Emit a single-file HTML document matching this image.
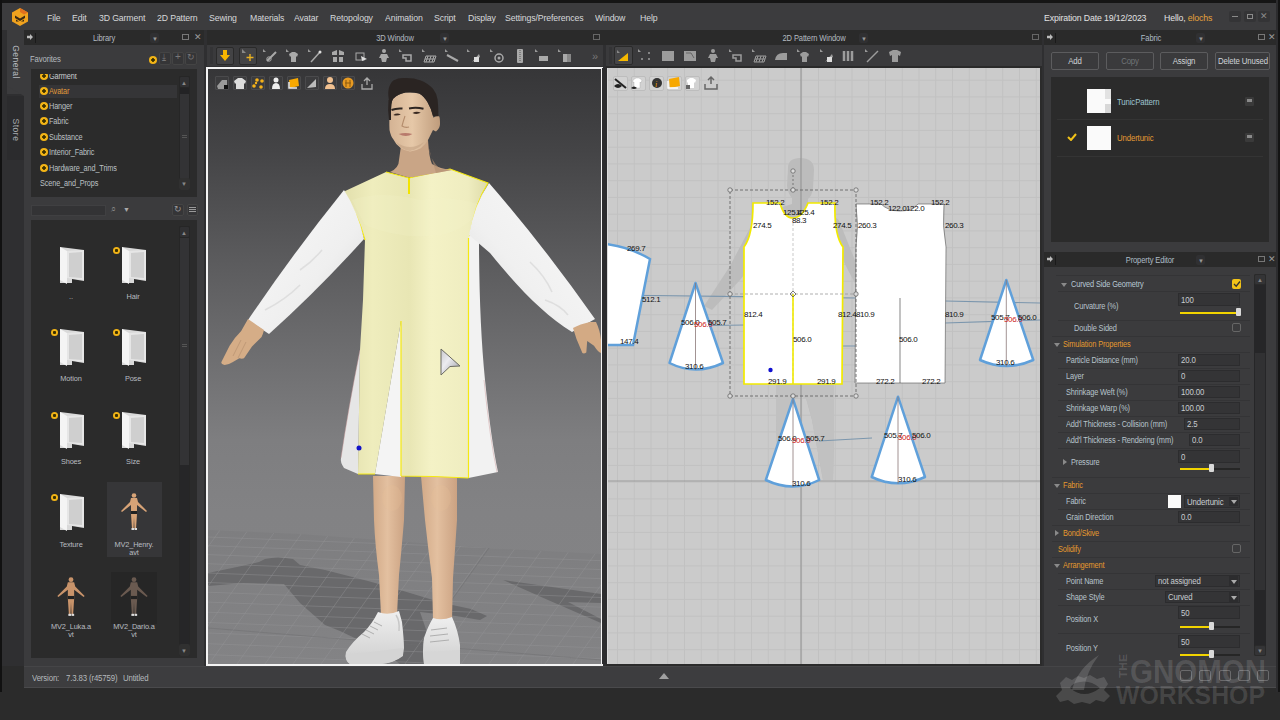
<!DOCTYPE html>
<html><head><meta charset="utf-8">
<style>
*{margin:0;padding:0;box-sizing:border-box}
html,body{width:1280px;height:720px;overflow:hidden;background:#2b2b2b;font-family:"Liberation Sans",sans-serif;color:#c9ccd0}
.a{position:absolute}
.t{position:absolute;white-space:nowrap;font-size:9px;line-height:12px;letter-spacing:-0.15px}
svg{position:absolute;overflow:hidden}
</style></head><body>
<div class="a" style="left:0px;top:0px;width:1280px;height:3px;background:#151515;"></div>
<div class="a" style="left:0px;top:0px;width:2px;height:692px;background:#111;"></div>
<div class="a" style="left:2px;top:3px;width:1274px;height:27px;background:#3c3c3e;"></div>
<svg style="left:10px;top:7px" width="20" height="20" viewBox="0 0 20 20">
<polygon points="10,1 18,5.5 18,14.5 10,19 2,14.5 2,5.5" fill="#f0a21e"/>
<polygon points="10,1 18,5.5 14,7.5 10,5" fill="#e2701e"/>
<path d="M5 8.5 L10 11.5 L15 8.5 L15 11 L10 14 L5 11 Z" fill="#3a2a14"/>
<path d="M6 12.5 L9 14.5 L6 14.5Z M14 12.5 L11 14.5 L14 14.5Z" fill="#3a2a14"/>
</svg>
<div class="t" style="left:47px;top:12px;font-size:9.5px;color:#d6d8da;transform:scaleX(0.92);transform-origin:0 50%;">File</div>
<div class="t" style="left:72px;top:12px;font-size:9.5px;color:#d6d8da;transform:scaleX(0.92);transform-origin:0 50%;">Edit</div>
<div class="t" style="left:99px;top:12px;font-size:9.5px;color:#d6d8da;transform:scaleX(0.92);transform-origin:0 50%;">3D Garment</div>
<div class="t" style="left:157px;top:12px;font-size:9.5px;color:#d6d8da;transform:scaleX(0.92);transform-origin:0 50%;">2D Pattern</div>
<div class="t" style="left:209px;top:12px;font-size:9.5px;color:#d6d8da;transform:scaleX(0.92);transform-origin:0 50%;">Sewing</div>
<div class="t" style="left:250px;top:12px;font-size:9.5px;color:#d6d8da;transform:scaleX(0.92);transform-origin:0 50%;">Materials</div>
<div class="t" style="left:294px;top:12px;font-size:9.5px;color:#d6d8da;transform:scaleX(0.92);transform-origin:0 50%;">Avatar</div>
<div class="t" style="left:330px;top:12px;font-size:9.5px;color:#d6d8da;transform:scaleX(0.92);transform-origin:0 50%;">Retopology</div>
<div class="t" style="left:385px;top:12px;font-size:9.5px;color:#d6d8da;transform:scaleX(0.92);transform-origin:0 50%;">Animation</div>
<div class="t" style="left:434px;top:12px;font-size:9.5px;color:#d6d8da;transform:scaleX(0.92);transform-origin:0 50%;">Script</div>
<div class="t" style="left:468px;top:12px;font-size:9.5px;color:#d6d8da;transform:scaleX(0.92);transform-origin:0 50%;">Display</div>
<div class="t" style="left:505px;top:12px;font-size:9.5px;color:#d6d8da;transform:scaleX(0.92);transform-origin:0 50%;">Settings/Preferences</div>
<div class="t" style="left:595px;top:12px;font-size:9.5px;color:#d6d8da;transform:scaleX(0.92);transform-origin:0 50%;">Window</div>
<div class="t" style="left:640px;top:12px;font-size:9.5px;color:#d6d8da;transform:scaleX(0.92);transform-origin:0 50%;">Help</div>
<div class="t" style="left:1044px;top:12px;font-size:9.5px;color:#e2e2e2;transform:scaleX(0.92);transform-origin:0 50%;">Expiration Date 19/12/2023</div>
<div class="t" style="left:1164px;top:12px;font-size:9.5px;color:#e2e2e2;transform:scaleX(0.92);transform-origin:0 50%;">Hello, <span style="color:#e6a33c">elochs</span></div>
<div class="a" style="left:1229px;top:11px;width:12px;height:11px;background:#343436;border-radius:2px"></div>
<div class="a" style="left:1244px;top:11px;width:12px;height:11px;background:#343436;border-radius:2px"></div>
<div class="a" style="left:1258px;top:11px;width:12px;height:11px;background:#343436;border-radius:2px"></div>
<div class="a" style="left:1232px;top:16px;width:6px;height:1px;background:#8a8a8a"></div>
<div class="a" style="left:1247px;top:14px;width:6px;height:5px;border:1px solid #8a8a8a"></div>
<div class="t" style="left:1260px;top:10px;font-size:9px;color:#8a8a8a;transform:none">&#x2715;</div>
<div class="a" style="left:2px;top:30px;width:22px;height:636px;background:#2f2f31;"></div>
<div class="a" style="left:7px;top:30px;width:17px;height:64px;background:#3b3b3d;"></div>
<svg style="left:7px;top:86px" width="17" height="10"><polygon points="0,0 17,0 17,10" fill="#3b3b3d"/></svg>
<div class="a" style="left:7px;top:96px;width:17px;height:64px;background:#2b2b2d;"></div>
<div class="t" style="left:-2px;top:56px;width:36px;text-align:center;font-size:8.5px;color:#b8bcc0;transform:rotate(90deg);letter-spacing:0.5px">General</div>
<div class="t" style="left:-2px;top:124px;width:36px;text-align:center;font-size:8.5px;color:#a8acb0;transform:rotate(90deg);letter-spacing:0.5px">Store</div>
<div class="a" style="left:24px;top:30px;width:180px;height:15px;background:#2a2a2a;"></div>
<div class="a" style="left:24px;top:45px;width:180px;height:621px;background:#3b3b3d;"></div>
<div class="a" style="left:27px;top:34px;width:6px;height:6px;background:#bbb;clip-path:polygon(0 30%,50% 30%,50% 0,100% 50%,50% 100%,50% 70%,0 70%)"></div>
<div class="a" style="left:35px;top:33px;width:1px;height:10px;background:#1a1a1a;"></div>
<div class="t" style="left:4px;width:200px;text-align:center;top:32px;font-size:9px;color:#b4bac0;transform:scaleX(0.84);">Library</div>
<div class="a" style="left:150px;top:33px;width:9px;height:10px;background:#303032;border-radius:2px"></div>
<div class="t" style="left:152px;top:33px;font-size:6px;color:#999">&#9660;</div>
<div class="a" style="left:182px;top:34px;width:7px;height:6px;background:transparent;border:1px solid #777"></div>
<div class="t" style="left:194px;top:31px;font-size:9px;color:#9a9a9a">&#x2715;</div>
<div class="t" style="left:30px;top:53px;font-size:9px;color:#b4babe;transform:scaleX(0.86);transform-origin:0 50%;">Favorites</div>
<div class="a" style="left:149px;top:56px;width:8px;height:8px;border-radius:50%;background:radial-gradient(#3a3000 0 1.5px,#f2b416 2px);"></div>
<div class="a" style="left:159px;top:52px;width:12px;height:13px;background:#353537;border:1px solid #444;border-radius:2px"></div>
<div class="a" style="left:172px;top:52px;width:12px;height:13px;background:#353537;border:1px solid #444;border-radius:2px"></div>
<div class="a" style="left:185px;top:52px;width:12px;height:13px;background:#353537;border:1px solid #444;border-radius:2px"></div>
<div class="t" style="left:162px;top:51px;font-size:9px;color:#777">&#x2913;</div>
<div class="t" style="left:175px;top:51px;font-size:10px;color:#777">+</div>
<div class="t" style="left:187px;top:51px;font-size:9px;color:#777">&#x21bb;</div>
<div class="a" style="left:31px;top:69px;width:166px;height:128px;background:#2b2b2b;"></div>
<div class="a" style="left:39px;top:85px;width:138px;height:13px;background:#353537;"></div>
<div class="a" style="left:40px;top:72px;width:8px;height:8px;border-radius:50%;background:radial-gradient(#3a3000 0 1.5px,#f2b416 2px);"></div>
<div class="t" style="left:49px;top:70px;font-size:8.5px;color:#c9ccd0;transform:scaleX(0.86);transform-origin:0 50%;">Garment</div>
<div class="a" style="left:40px;top:87px;width:8px;height:8px;border-radius:50%;background:radial-gradient(#3a3000 0 1.5px,#f2b416 2px);"></div>
<div class="t" style="left:49px;top:85px;font-size:8.5px;color:#e19a3a;transform:scaleX(0.86);transform-origin:0 50%;">Avatar</div>
<div class="a" style="left:40px;top:102px;width:8px;height:8px;border-radius:50%;background:radial-gradient(#3a3000 0 1.5px,#f2b416 2px);"></div>
<div class="t" style="left:49px;top:100px;font-size:8.5px;color:#bcc0c4;transform:scaleX(0.86);transform-origin:0 50%;">Hanger</div>
<div class="a" style="left:40px;top:117px;width:8px;height:8px;border-radius:50%;background:radial-gradient(#3a3000 0 1.5px,#f2b416 2px);"></div>
<div class="t" style="left:49px;top:115px;font-size:8.5px;color:#bcc0c4;transform:scaleX(0.86);transform-origin:0 50%;">Fabric</div>
<div class="a" style="left:40px;top:133px;width:8px;height:8px;border-radius:50%;background:radial-gradient(#3a3000 0 1.5px,#f2b416 2px);"></div>
<div class="t" style="left:49px;top:131px;font-size:8.5px;color:#bcc0c4;transform:scaleX(0.86);transform-origin:0 50%;">Substance</div>
<div class="a" style="left:40px;top:148px;width:8px;height:8px;border-radius:50%;background:radial-gradient(#3a3000 0 1.5px,#f2b416 2px);"></div>
<div class="t" style="left:49px;top:146px;font-size:8.5px;color:#bcc0c4;transform:scaleX(0.86);transform-origin:0 50%;">Interior_Fabric</div>
<div class="a" style="left:40px;top:164px;width:8px;height:8px;border-radius:50%;background:radial-gradient(#3a3000 0 1.5px,#f2b416 2px);"></div>
<div class="t" style="left:49px;top:162px;font-size:8.5px;color:#bcc0c4;transform:scaleX(0.86);transform-origin:0 50%;">Hardware_and_Trims</div>
<div class="t" style="left:40px;top:177px;font-size:8.5px;color:#bcc0c4;transform:scaleX(0.86);transform-origin:0 50%;">Scene_and_Props</div>
<div class="a" style="left:31px;top:69px;width:166px;height:5px;background:#2b2b2b;"></div>
<div class="a" style="left:179px;top:76px;width:11px;height:114px;background:#333335;border-radius:2px;border:1px solid #262626"></div>
<div class="a" style="left:179px;top:76px;width:11px;height:12px;background:#303032;border-radius:2px;border:1px solid #262626"></div>
<div class="t" style="left:181px;top:77px;font-size:6px;color:#888;transform:none">&#9650;</div>
<div class="a" style="left:180px;top:88px;width:9px;height:6px;background:#232325;"></div>
<div class="a" style="left:182px;top:135px;width:5px;height:1px;background:#555;"></div>
<div class="a" style="left:182px;top:137px;width:5px;height:1px;background:#555;"></div>
<div class="a" style="left:179px;top:178px;width:11px;height:12px;background:#303030;border-radius:2px"></div>
<div class="t" style="left:181px;top:178px;font-size:6px;color:#888">&#9660;</div>
<div class="a" style="left:31px;top:205px;width:75px;height:11px;background:#333335;border:1px solid #404042"></div>
<div class="t" style="left:111px;top:203px;font-size:9px;color:#888">&#x2315;</div>
<div class="t" style="left:123px;top:204px;font-size:7px;color:#aaa">&#9660;</div>
<div class="a" style="left:172px;top:204px;width:12px;height:12px;background:#353537;border:1px solid #444;border-radius:2px"></div>
<div class="t" style="left:174px;top:203px;font-size:9px;color:#999">&#x21bb;</div>
<div class="a" style="left:187px;top:204px;width:11px;height:12px;background:#353537;border:1px solid #444;border-radius:2px"></div>
<div class="a" style="left:189px;top:207px;width:7px;height:6px;background:repeating-linear-gradient(#999 0 1px,transparent 1px 2px)"></div>
<div class="a" style="left:31px;top:220px;width:166px;height:438px;background:#2b2b2b;"></div>
<div class="a" style="left:179px;top:226px;width:11px;height:430px;background:#262628;border-radius:2px;border:1px solid #262626"></div>
<div class="a" style="left:179px;top:226px;width:11px;height:12px;background:#303032;border-radius:2px;border:1px solid #262626"></div>
<div class="t" style="left:181px;top:227px;font-size:6px;color:#888;transform:none">&#9650;</div>
<div class="a" style="left:180px;top:238px;width:9px;height:227px;background:#333335;"></div>
<div class="a" style="left:182px;top:344px;width:5px;height:1px;background:#555;"></div>
<div class="a" style="left:182px;top:346px;width:5px;height:1px;background:#555;"></div>
<div class="a" style="left:179px;top:644px;width:11px;height:12px;background:#303030;border-radius:2px"></div>
<div class="t" style="left:181px;top:645px;font-size:6px;color:#888">&#9660;</div>
<svg style="left:58px;top:247px" width="28" height="38" viewBox="0 0 28 38"><polygon points="2,0 26,3 26,34 14,32 14,36 2,36" fill="#d9d9d9"/><polygon points="2,0 9,4 9,37 2,33" fill="#f4f4f4"/><polygon points="9,4 26,3 26,33 9,31" fill="#e6e6e6"/><polygon points="11,6 24,5 24,31 11,30" fill="#cfcfcf"/></svg>
<div class="t" style="left:-29px;width:200px;text-align:center;top:291px;font-size:8px;color:#b8bcc0;transform:scaleX(0.92);">..</div>
<svg style="left:120px;top:247px" width="28" height="38" viewBox="0 0 28 38"><polygon points="2,0 26,3 26,34 14,32 14,36 2,36" fill="#d9d9d9"/><polygon points="2,0 9,4 9,37 2,33" fill="#f4f4f4"/><polygon points="9,4 26,3 26,33 9,31" fill="#e6e6e6"/><polygon points="11,6 24,5 24,31 11,30" fill="#cfcfcf"/></svg>
<div class="a" style="left:113px;top:247px;width:7px;height:7px;border-radius:50%;background:radial-gradient(#3a3000 0 1.3px,#f2b416 1.8px);"></div>
<div class="t" style="left:33px;width:200px;text-align:center;top:291px;font-size:8px;color:#b8bcc0;transform:scaleX(0.92);">Hair</div>
<svg style="left:58px;top:329px" width="28" height="38" viewBox="0 0 28 38"><polygon points="2,0 26,3 26,34 14,32 14,36 2,36" fill="#d9d9d9"/><polygon points="2,0 9,4 9,37 2,33" fill="#f4f4f4"/><polygon points="9,4 26,3 26,33 9,31" fill="#e6e6e6"/><polygon points="11,6 24,5 24,31 11,30" fill="#cfcfcf"/></svg>
<div class="a" style="left:51px;top:329px;width:7px;height:7px;border-radius:50%;background:radial-gradient(#3a3000 0 1.3px,#f2b416 1.8px);"></div>
<div class="t" style="left:-29px;width:200px;text-align:center;top:373px;font-size:8px;color:#b8bcc0;transform:scaleX(0.92);">Motion</div>
<svg style="left:120px;top:329px" width="28" height="38" viewBox="0 0 28 38"><polygon points="2,0 26,3 26,34 14,32 14,36 2,36" fill="#d9d9d9"/><polygon points="2,0 9,4 9,37 2,33" fill="#f4f4f4"/><polygon points="9,4 26,3 26,33 9,31" fill="#e6e6e6"/><polygon points="11,6 24,5 24,31 11,30" fill="#cfcfcf"/></svg>
<div class="a" style="left:113px;top:329px;width:7px;height:7px;border-radius:50%;background:radial-gradient(#3a3000 0 1.3px,#f2b416 1.8px);"></div>
<div class="t" style="left:33px;width:200px;text-align:center;top:373px;font-size:8px;color:#b8bcc0;transform:scaleX(0.92);">Pose</div>
<svg style="left:58px;top:412px" width="28" height="38" viewBox="0 0 28 38"><polygon points="2,0 26,3 26,34 14,32 14,36 2,36" fill="#d9d9d9"/><polygon points="2,0 9,4 9,37 2,33" fill="#f4f4f4"/><polygon points="9,4 26,3 26,33 9,31" fill="#e6e6e6"/><polygon points="11,6 24,5 24,31 11,30" fill="#cfcfcf"/></svg>
<div class="a" style="left:51px;top:412px;width:7px;height:7px;border-radius:50%;background:radial-gradient(#3a3000 0 1.3px,#f2b416 1.8px);"></div>
<div class="t" style="left:-29px;width:200px;text-align:center;top:456px;font-size:8px;color:#b8bcc0;transform:scaleX(0.92);">Shoes</div>
<svg style="left:120px;top:412px" width="28" height="38" viewBox="0 0 28 38"><polygon points="2,0 26,3 26,34 14,32 14,36 2,36" fill="#d9d9d9"/><polygon points="2,0 9,4 9,37 2,33" fill="#f4f4f4"/><polygon points="9,4 26,3 26,33 9,31" fill="#e6e6e6"/><polygon points="11,6 24,5 24,31 11,30" fill="#cfcfcf"/></svg>
<div class="a" style="left:113px;top:412px;width:7px;height:7px;border-radius:50%;background:radial-gradient(#3a3000 0 1.3px,#f2b416 1.8px);"></div>
<div class="t" style="left:33px;width:200px;text-align:center;top:456px;font-size:8px;color:#b8bcc0;transform:scaleX(0.92);">Size</div>
<svg style="left:58px;top:494px" width="28" height="38" viewBox="0 0 28 38"><polygon points="2,0 26,3 26,34 14,32 14,36 2,36" fill="#d9d9d9"/><polygon points="2,0 9,4 9,37 2,33" fill="#f4f4f4"/><polygon points="9,4 26,3 26,33 9,31" fill="#e6e6e6"/><polygon points="11,6 24,5 24,31 11,30" fill="#cfcfcf"/></svg>
<div class="a" style="left:51px;top:494px;width:7px;height:7px;border-radius:50%;background:radial-gradient(#3a3000 0 1.3px,#f2b416 1.8px);"></div>
<div class="t" style="left:-29px;width:200px;text-align:center;top:539px;font-size:8px;color:#b8bcc0;transform:scaleX(0.92);">Texture</div>
<div class="a" style="left:107px;top:482px;width:55px;height:75px;background:#363638;"></div>
<div class="t" style="left:34px;width:200px;text-align:center;top:539px;font-size:8px;color:#b8bcc0;transform:scaleX(0.92);">MV2_Henry.</div>
<div class="t" style="left:34px;width:200px;text-align:center;top:547px;font-size:8px;color:#b8bcc0;transform:scaleX(0.92);">avt</div>
<div class="a" style="left:111px;top:572px;width:46px;height:52px;background:#262626;"></div>
<div class="t" style="left:-29px;width:200px;text-align:center;top:621px;font-size:8px;color:#b8bcc0;transform:scaleX(0.92);">MV2_Luka.a</div>
<div class="t" style="left:-29px;width:200px;text-align:center;top:629px;font-size:8px;color:#b8bcc0;transform:scaleX(0.92);">vt</div>
<div class="t" style="left:34px;width:200px;text-align:center;top:621px;font-size:8px;color:#b8bcc0;transform:scaleX(0.92);">MV2_Dario.a</div>
<div class="t" style="left:34px;width:200px;text-align:center;top:629px;font-size:8px;color:#b8bcc0;transform:scaleX(0.92);">vt</div>
<svg style="left:114.0px;top:492px;" width="40.0" height="40" viewBox="0 0 40 40"><circle cx="20" cy="3.5" r="2.3" fill="#d7a377"/><path d="M17 6 L23 6 L24 10 L33 19 L32 20 L23 13 L23 22 L22 37 L20.5 37 L20 25 L19.5 37 L18 37 L17 22 L17 13 L8 20 L7 19 L16 10 Z" fill="#d7a377"/><rect x="17" y="19" width="6" height="3" fill="#222"/><rect x="17.5" y="36" width="2.5" height="2" fill="#ddd"/><rect x="20.5" y="36" width="2.5" height="2" fill="#ddd"/></svg>
<svg style="left:50.0px;top:576px;" width="42.0" height="42" viewBox="0 0 40 40"><circle cx="20" cy="3.5" r="2.3" fill="#c8936a"/><path d="M17 6 L23 6 L24 10 L33 19 L32 20 L23 13 L23 22 L22 37 L20.5 37 L20 25 L19.5 37 L18 37 L17 22 L17 13 L8 20 L7 19 L16 10 Z" fill="#c8936a"/><rect x="17" y="19" width="6" height="3" fill="#222"/><rect x="17.5" y="36" width="2.5" height="2" fill="#ddd"/><rect x="20.5" y="36" width="2.5" height="2" fill="#ddd"/></svg>
<svg style="left:113.0px;top:576px;" width="42.0" height="42" viewBox="0 0 40 40"><circle cx="20" cy="3.5" r="2.3" fill="#6a5a50"/><path d="M17 6 L23 6 L24 10 L33 19 L32 20 L23 13 L23 22 L22 37 L20.5 37 L20 25 L19.5 37 L18 37 L17 22 L17 13 L8 20 L7 19 L16 10 Z" fill="#6a5a50"/><rect x="17" y="19" width="6" height="3" fill="#222"/><rect x="17.5" y="36" width="2.5" height="2" fill="#ddd"/><rect x="20.5" y="36" width="2.5" height="2" fill="#ddd"/></svg>
<div class="a" style="left:24px;top:666px;width:1252px;height:22px;background:#3d3d3f;border-top:1px solid #454547;border-bottom:1px solid #4a4a4c"></div>
<div class="t" style="left:32px;top:672px;font-size:8.5px;color:#b5b9bd;transform:scaleX(0.92);transform-origin:0 50%;">Version:</div>
<div class="t" style="left:66px;top:672px;font-size:8.5px;color:#b5b9bd;transform:scaleX(0.92);transform-origin:0 50%;">7.3.83 (r45759)</div>
<div class="t" style="left:123px;top:672px;font-size:8.5px;color:#b5b9bd;transform:scaleX(0.92);transform-origin:0 50%;">Untitled</div>
<div class="a" style="left:204px;top:30px;width:402px;height:636px;background:#2f2f31;"></div>
<div class="a" style="left:207px;top:30px;width:399px;height:15px;background:#2a2a2a;"></div>
<div class="t" style="left:295px;width:200px;text-align:center;top:32px;font-size:9px;color:#b4bac0;transform:scaleX(0.84);">3D Window</div>
<div class="a" style="left:440px;top:33px;width:9px;height:10px;background:#303032;border-radius:2px"></div>
<div class="t" style="left:442px;top:33px;font-size:6px;color:#999">&#9660;</div>
<div class="a" style="left:593px;top:34px;width:7px;height:6px;background:transparent;border:1px solid #666"></div>
<div class="a" style="left:207px;top:45px;width:396px;height:21px;background:#3a3a3c;"></div>
<div class="a" style="left:210px;top:47px;width:3px;height:17px;background:#343436;"></div>
<div class="a" style="left:216px;top:47px;width:18px;height:18px;background:#434345;border:1px solid #2a2a2a;border-radius:2px"></div>
<div class="a" style="left:239px;top:47px;width:18px;height:18px;background:#434345;border:1px solid #2a2a2a;border-radius:2px"></div>
<svg style="left:219px;top:50px" width="12" height="12" viewBox="0 0 12 12"><path d="M4 0 H8 V5 H11 L6 11 L1 5 H4 Z" fill="#f7b500"/></svg>
<svg style="left:241px;top:49px" width="14" height="14" viewBox="0 0 14 14"><path d="M1 0 L5 4 L1 4Z" fill="#888"/><path d="M9 5 V12 M5.5 8.5 H12.5" stroke="#e8b020" stroke-width="1.4"/></svg>
<svg style="left:262.0px;top:48px" width="16" height="16" viewBox="0 0 16 16"><path d="M1 1 L4 4 L1 4Z" fill="#999"/><path d="M5 13 L14 4" stroke="#a9a9a9" stroke-width="2"/><circle cx="7" cy="11" r="2.2" fill="none" stroke="#a9a9a9"/></svg>
<svg style="left:284.7px;top:48px" width="16" height="16" viewBox="0 0 16 16"><path d="M1 1 L4 4 L1 4Z" fill="#999"/><path d="M4 6 L7 4 H10 L13 6 L12 9 L11 8 V14 H6 V8 L5 9 Z" fill="#a9a9a9"/></svg>
<svg style="left:307.4px;top:48px" width="16" height="16" viewBox="0 0 16 16"><path d="M1 1 L4 4 L1 4Z" fill="#999"/><path d="M4 14 L13 4" stroke="#a9a9a9" stroke-width="1.5"/><circle cx="13" cy="4" r="1.5" fill="#ddd"/></svg>
<svg style="left:330.1px;top:48px" width="16" height="16" viewBox="0 0 16 16"><path d="M2 4 L7 2 V7 H2Z M9 2 L14 4 V7 H9Z M3 9 H7 V14 H3Z M9 9 H13 V14 H9Z" fill="#a9a9a9"/></svg>
<svg style="left:352.8px;top:48px" width="16" height="16" viewBox="0 0 16 16"><rect x="3" y="5" width="8" height="7" fill="none" stroke="#a9a9a9"/><path d="M8 8 L14 11 L9 13Z" fill="#ddd"/></svg>
<svg style="left:375.5px;top:48px" width="16" height="16" viewBox="0 0 16 16"><circle cx="8" cy="3" r="2" fill="#a9a9a9"/><path d="M5 6 H11 L13 10 L11 10 L10 14 H6 L5 10 L3 10Z" fill="#a9a9a9"/></svg>
<svg style="left:398.2px;top:48px" width="16" height="16" viewBox="0 0 16 16"><path d="M1 1 L4 4 L1 4Z" fill="#999"/><path d="M5 7 H13 V13 H8 V10 H5Z" fill="none" stroke="#a9a9a9" stroke-width="1.5"/></svg>
<svg style="left:420.9px;top:48px" width="16" height="16" viewBox="0 0 16 16"><path d="M1 1 L4 4 L1 4Z" fill="#999"/><path d="M5 8 H15 L13 14 H3Z M7 8 L5 14 M10 8 L8 14 M13 8 L11 14 M4 11 H14" fill="none" stroke="#a9a9a9"/></svg>
<svg style="left:443.6px;top:48px" width="16" height="16" viewBox="0 0 16 16"><path d="M1 1 L4 4 L1 4Z" fill="#999"/><path d="M3 7 L14 13" stroke="#a9a9a9" stroke-width="2"/></svg>
<svg style="left:466.29999999999995px;top:48px" width="16" height="16" viewBox="0 0 16 16"><path d="M1 1 L4 4 L1 4Z" fill="#999"/><path d="M6 14 L13 6 L14 9 Z" fill="#a9a9a9"/><rect x="8" y="9" width="5" height="5" fill="#ddd"/></svg>
<svg style="left:489.0px;top:48px" width="16" height="16" viewBox="0 0 16 16"><path d="M1 1 L4 4 L1 4Z" fill="#999"/><circle cx="10" cy="10" r="4" fill="none" stroke="#a9a9a9" stroke-width="1.5"/><circle cx="10" cy="10" r="1.5" fill="#a9a9a9"/></svg>
<svg style="left:511.70000000000005px;top:48px" width="16" height="16" viewBox="0 0 16 16"><rect x="5" y="1" width="6" height="14" rx="1" fill="#a9a9a9"/><path d="M8 2 V14" stroke="#555" stroke-dasharray="1 1"/></svg>
<svg style="left:534.4px;top:48px" width="16" height="16" viewBox="0 0 16 16"><path d="M1 1 L4 4 L1 4Z" fill="#999"/><path d="M5 8 H14 V13 H5Z" fill="#a9a9a9"/></svg>
<svg style="left:557.0999999999999px;top:48px" width="16" height="16" viewBox="0 0 16 16"><path d="M1 1 L4 4 L1 4Z" fill="#999"/><rect x="6" y="6" width="4" height="8" fill="#a9a9a9"/><rect x="10" y="6" width="4" height="8" fill="#888"/></svg>
<div class="t" style="left:592px;top:50px;font-size:11px;color:#777">&#187;</div>
<div class="a" style="left:206px;top:67px;width:397px;height:599px;background:#f4f4f4"></div>
<div class="a" style="left:208px;top:69px;width:393px;height:595px;background:linear-gradient(#343436 0%,#3d3d3f 15%,#4f4f51 35%,#646466 55%,#6f6f71 70%,#737375 100%)"></div>
<svg style="left:208px;top:69px" width="393" height="595" viewBox="208 69 393 595"><defs><linearGradient id="bg3" x1="0" y1="69" x2="0" y2="664" gradientUnits="userSpaceOnUse"><stop offset="0" stop-color="#363638"/><stop offset="0.06" stop-color="#3c3c3e"/><stop offset="0.136" stop-color="#444446"/><stop offset="0.321" stop-color="#5b5b5d"/><stop offset="0.481" stop-color="#6e6e70"/><stop offset="0.624" stop-color="#7e7e80"/><stop offset="0.745" stop-color="#828284"/><stop offset="1" stop-color="#848486"/></linearGradient><linearGradient id="floor" x1="0" y1="530" x2="0" y2="664" gradientUnits="userSpaceOnUse"><stop offset="0" stop-color="#7e7e80"/><stop offset="1" stop-color="#838385"/></linearGradient><linearGradient id="yel" x1="343" y1="0" x2="490" y2="0" gradientUnits="userSpaceOnUse"><stop offset="0" stop-color="#e2dfac"/><stop offset="0.2" stop-color="#efedbd"/><stop offset="0.45" stop-color="#e8e6b4"/><stop offset="0.6" stop-color="#f4f2c6"/><stop offset="0.85" stop-color="#efedc0"/><stop offset="1" stop-color="#dcd9a6"/></linearGradient><linearGradient id="slvL" x1="0" y1="0" x2="1" y2="1"><stop offset="0" stop-color="#fafafa"/><stop offset="0.6" stop-color="#efefef"/><stop offset="1" stop-color="#d8d8d8"/></linearGradient><linearGradient id="slvR" x1="1" y1="0" x2="0" y2="1"><stop offset="0" stop-color="#fafafa"/><stop offset="0.6" stop-color="#f0f0f0"/><stop offset="1" stop-color="#dadada"/></linearGradient><linearGradient id="leg" x1="0" y1="0" x2="1" y2="0"><stop offset="0" stop-color="#d2aa88"/><stop offset="0.45" stop-color="#e3c0a0"/><stop offset="1" stop-color="#cba282"/></linearGradient><linearGradient id="face" x1="0" y1="0" x2="1" y2="0"><stop offset="0" stop-color="#d4b394"/><stop offset="0.45" stop-color="#e6c8a8"/><stop offset="1" stop-color="#bf9c7c"/></linearGradient><linearGradient id="shoe" x1="0" y1="0" x2="0" y2="1"><stop offset="0" stop-color="#efefef"/><stop offset="1" stop-color="#cfcfcf"/></linearGradient><linearGradient id="cur" x1="0" y1="0" x2="1" y2="1"><stop offset="0" stop-color="#c8c8cc"/><stop offset="0.4" stop-color="#ececf0"/><stop offset="1" stop-color="#9a9aa2"/></linearGradient></defs><rect x="208" y="69" width="393" height="595" fill="url(#bg3)"/><clipPath id="flc"><path d="M208 530 L300 534 L488 548 L601 554 L601 664 L208 664 Z"/></clipPath><path d="M208 530 L300 534 L488 548 L601 554 L601 664 L208 664 Z" fill="url(#floor)"/><path d="M208 573 L237 567 L259 562 L265 559 L278 557 L293 559 L300 565 L325 570 L368 581 L400 590 L443 603 L471 609 L487 616 L480 620 L456 616 L420 612 L431 644 L425 664 L400 664 L380 650 L340 631 L325 625 L300 603 L284 584 L243 583 L208 586 Z" fill="#69696b"/><path d="M503 580 L601 594 L601 603 L568 602 L601 619 L601 623 L548 600 Z" fill="#69696b"/><path clip-path="url(#flc)" d="M208 537.0 L601 552.0 M208 545.7 L601 560.7 M208 554.6 L601 569.6 M208 563.7 L601 578.7 M208 573.0 L601 588.0 M208 582.5 L601 597.5 M208 592.2 L601 607.2 M208 602.1 L601 617.1 M208 612.2 L601 627.2 M208 622.5 L601 637.5 M208 633.0 L601 648.0 M208 643.7 L601 658.7 M208 654.6 L601 669.6 M208 665.7 L601 680.7 M208 677.0 L601 692.0 M52 530 L-43 664 M80 530 L-15 664 M108 530 L13 664 M136 530 L41 664 M164 530 L69 664 M192 530 L97 664 M220 530 L125 664 M248 530 L153 664 M276 530 L181 664 M304 530 L209 664 M332 530 L237 664 M360 530 L265 664 M388 530 L293 664 M416 530 L321 664 M444 530 L349 664 M472 530 L377 664 M500 530 L405 664 M528 530 L433 664 M556 530 L461 664 M584 530 L489 664 M612 530 L517 664 M640 530 L545 664 M668 530 L573 664 M696 530 L601 664 M724 530 L629 664 M752 530 L657 664 M780 530 L685 664 M808 530 L713 664" stroke="#959597" stroke-width="0.7" fill="none" opacity="0.6"/><path d="M489 548 L406 664 M208 628 L601 660" stroke="#6e6e70" stroke-width="0.8" fill="none" opacity="0.6"/><path d="M373 476 L405 476 L404 520 Q402 545 399 575 L397 615 L381 615 L379 575 Q375 545 374 520 Z" fill="url(#leg)"/><path d="M421 476 L457 476 L457 520 Q455 550 453 578 L452 620 L433 620 L432 578 Q428 548 425 520 Z" fill="url(#leg)"/><ellipse cx="392" cy="498" rx="10" ry="13" fill="#e8c199" opacity="0.25"/><ellipse cx="441" cy="498" rx="10" ry="13" fill="#e8c199" opacity="0.25"/><path d="M378 612 Q388 616 399 611 L402 622 Q404 640 404 648 L403 655 Q396 662 382 664 L350 664 Q344 660 346 652 Q352 642 364 632 Q372 624 378 612 Z" fill="url(#shoe)"/><path d="M346 654 Q375 652 403 648 L403 656 Q394 663 380 664 L350 664 Q345 661 346 654 Z" fill="#d4d4d4"/><path d="M362 634 L370 638 M366 630 L374 634 M370 626 L378 630 M374 622 L382 626" stroke="#a8a8a8" stroke-width="0.9"/><path d="M396 615 Q400 621 399 631" stroke="#c8c8c8" stroke-width="1.5" fill="none"/><path d="M433 618 Q442 621 452 617 Q458 630 460 645 L460 664 L424 664 Q422 650 424 638 Q428 626 433 618 Z" fill="url(#shoe)"/><path d="M423 652 L460 650 L460 664 L424 664 Z" fill="#d6d6d6"/><path d="M431 630 L447 628 M430 636 L448 634 M430 642 L449 640" stroke="#a8a8a8" stroke-width="0.9"/><path d="M360 350 L358 474 L344 468 Q340 462 341 458 Q348 410 360 350 Z" fill="#e6e6e6"/><path d="M401 321 L401 477 L375 474 Z" fill="#f4f4f4"/><path d="M466 228 L479 236 Q479 320 485 380 Q491 440 498 472 L468.5 478 Z" fill="#f2f2f2"/><path d="M341 458 Q348 410 360 350 M484 380 Q490 440 497 472" stroke="#c89090" stroke-width="0.6" fill="none" opacity="0.7"/><path d="M386 172 L409 178 L450 169 L488 183 Q474 205 470 236 L468.5 238 L468.5 478 Q432 476 401 476 L401 321 L375 474 L358 474 L360 350 L363 300 L365 240 Q358 214 343 192 Z" fill="url(#yel)"/><path d="M386 172 L409 178 L450 169 L488 183 Q474 205 470 236 M343 192 Q358 214 365 240 M401 321 V476 M468.5 478 Q432 476 401 476 M375 474 L358 474 M468.5 238 L468.5 478" stroke="#f5ea10" stroke-width="1.2" fill="none"/><path d="M409 178 L409 194" stroke="#f2e400" stroke-width="2"/><path d="M352 200 Q380 190 420 200 Q455 195 480 205 Q470 230 440 235 Q400 240 365 225 Z" fill="#f7f5cc" opacity="0.2"/><path d="M344 190 Q 294 252 248 320 L269 334 Q 318 290 364 239 Q 358 212 344 190 Z" fill="url(#slvL)"/><path d="M489 183 Q 543 245 595 319 L572 332 C 545 315, 520 290, 490 253 L 469 235 Q 474 205 489 183 Z" fill="url(#slvR)"/><path d="M265 310 Q285 300 300 285 M300 270 Q312 262 322 250 M530 262 Q545 276 552 292 M545 300 Q560 305 568 315" stroke="#d2d2d2" stroke-width="1.6" fill="none" opacity="0.6"/><path d="M248 319 L264 330 Q263 334 261.6 337 L252 346.6 L244 358.3 Q242 359 239.3 358.3 L232.5 362.2 Q228 365 224.7 365 Q220 364 221.8 361.2 L229.6 345.7 Q235 337 241.2 331 Z" fill="#d5ad87"/><path d="M241 340 L233 356 M246 342 L238 358" stroke="#b48e6e" stroke-width="0.9" opacity="0.7"/><path d="M573 328 Q580 324 590 322 L596 322 Q600 330 601 340 L601 353 Q598 352 594 345.7 L587.2 340.9 L586.3 352.5 Q584 354 582.4 353 L576.5 339 Z" fill="#d3aa84"/><path d="M401 146 L428 140 Q429 158 432 164 Q440 169 452 170 L436 173 L413 177 L407 177 L390 172 Q399 168 399 160 Z" fill="#c9a586"/><path d="M428 145 Q430 160 440 169 L452 170 L436 173 Z" fill="#b38f72" opacity="0.6"/><path d="M390 107 Q389 120 389.5 130 Q391 137 393.3 139.2 Q396 145 401 148.3 Q405 151 410 151.4 Q416 151 420.8 148.3 Q426 144 428.4 139.2 Q431 134 433 130 L436 131.5 Q440 128 440 124 Q440 117 439 116.3 Q436 115 433.5 117.8 L433 116 Q431 108 427.7 102.5 Q424 96 419 93.4 Q412 92 405.5 92.6 Q398 94 393 98.7 Q391 102 390 107 Z" fill="url(#face)"/><path d="M389.5 102.5 Q387.5 95 388.7 88.8 Q390 83 393.3 80.4 Q399 77.5 405.5 78.1 Q414 78 420.8 80.4 Q428 83 433 88.8 Q437 94 437.6 99.5 Q438.5 108 438.4 116.3 L433 116.3 Q431 108 427.7 102.5 Q424 96 419.3 93.4 Q412 91.5 405.5 92.6 Q398 94 393.3 98.7 Q391 102 390.3 107 Z" fill="#2a2422"/><path d="M391.5 110 Q396 108 402.5 108.5 M409 108.5 Q416 107 423.5 108.8" stroke="#2e2622" stroke-width="2" fill="none"/><path d="M388.5 100 L392 100 Q390.5 110 391 120 L389 120 Q387.5 110 388.5 100 Z" fill="#2a2422"/><path d="M393.3 115 Q397 112.5 400.8 114.5 Q397 116.3 393.3 115 Z M412.5 113 Q416.5 110.8 420.8 112.8 Q416.5 115 412.5 113 Z" fill="#3a2a22"/><path d="M405 116 Q403 122 402 126 Q405 128 409 127" stroke="#b48c6c" stroke-width="1.1" fill="none"/><path d="M398.7 134 Q405 132 412.4 134 Q406 138 398.7 134 Z" fill="#b87a6c"/><path d="M396 142 Q410 152 424 142 Q418 150 410 151 Q401 150 396 142 Z" fill="#c3a184" opacity="0.6"/><circle cx="359" cy="448" r="2.5" fill="#1212c8"/><path d="M441 349 L460 366 L450 366.5 L441 375 Z" fill="url(#cur)" stroke="#6a6a60" stroke-width="1" stroke-linejoin="round"/></svg>
<div class="a" style="left:215px;top:76px;width:14px;height:14px;background:#3b3b3d;border:1px solid #4a4a4c;border-radius:1px"></div>
<div class="a" style="left:233px;top:76px;width:14px;height:14px;background:#3b3b3d;border:1px solid #4a4a4c;border-radius:1px"></div>
<div class="a" style="left:251px;top:76px;width:14px;height:14px;background:#3b3b3d;border:1px solid #4a4a4c;border-radius:1px"></div>
<div class="a" style="left:269px;top:76px;width:14px;height:14px;background:#3b3b3d;border:1px solid #4a4a4c;border-radius:1px"></div>
<div class="a" style="left:287px;top:76px;width:14px;height:14px;background:#3b3b3d;border:1px solid #4a4a4c;border-radius:1px"></div>
<div class="a" style="left:305px;top:76px;width:14px;height:14px;background:#3b3b3d;border:1px solid #4a4a4c;border-radius:1px"></div>
<div class="a" style="left:323px;top:76px;width:14px;height:14px;background:#3b3b3d;border:1px solid #4a4a4c;border-radius:1px"></div>
<div class="a" style="left:341px;top:76px;width:14px;height:14px;background:#3b3b3d;border:1px solid #4a4a4c;border-radius:1px"></div>
<svg style="left:215px;top:76px" width="160" height="16" viewBox="215 76 160 16"><path d="M217 86 L222 80 H227 V86 L224 89 H218Z" fill="#9a9a9a"/><rect x="224" y="85" width="4" height="4" fill="#111"/><path d="M234 81 L238 78 H242 L246 81 L245 84 L244 83 V89 H236 V83 L235 84Z" fill="#ddd"/><circle cx="254" cy="86" r="1.8" fill="#f5b21a"/><circle cx="257" cy="80" r="1.8" fill="#f5b21a"/><circle cx="262" cy="81" r="1.8" fill="#f5b21a"/><circle cx="261" cy="87" r="1.8" fill="#f5b21a"/><circle cx="256" cy="83" r="1.2" fill="#f5b21a"/><circle cx="276" cy="80" r="2.5" fill="#eee"/><path d="M272 89 Q272 83 276 83 Q280 83 280 89Z" fill="#eee"/><path d="M289 80 L298 78 L299 86 L290 88Z" fill="#f7a800"/><path d="M289 82 V88 H297" stroke="#eee" fill="none" stroke-width="1.5"/><path d="M307 88 L316 79 L316 87Z" fill="#bbb"/><circle cx="330" cy="80" r="3" fill="#f0c090"/><path d="M325 89 Q325 84 330 84 Q335 84 335 89Z" fill="#f0c090"/><circle cx="348" cy="83" r="5.5" fill="#e79a22"/><path d="M346 80 V87 M350 80 V87 M345 83 H351" stroke="#8a5a10"/><path d="M362 84 V89 H372 V84 M367 85 V79 M364 81 L367 78 L370 81" stroke="#aaa" fill="none" stroke-width="1.3"/></svg>
<div class="a" style="left:606px;top:30px;width:436px;height:15px;background:#2a2a2a;"></div>
<div class="t" style="left:714px;width:200px;text-align:center;top:32px;font-size:9px;color:#b4bac0;transform:scaleX(0.84);">2D Pattern Window</div>
<div class="a" style="left:859px;top:33px;width:9px;height:10px;background:#303032;border-radius:2px"></div>
<div class="t" style="left:861px;top:33px;font-size:6px;color:#999">&#9660;</div>
<div class="a" style="left:1032px;top:34px;width:7px;height:6px;background:transparent;border:1px solid #666"></div>
<div class="a" style="left:606px;top:45px;width:436px;height:21px;background:#3a3a3c;"></div>
<div class="a" style="left:609px;top:47px;width:3px;height:17px;background:#343436;"></div>
<div class="a" style="left:614px;top:46px;width:19px;height:19px;background:#454547;border:1px solid #2a2a2a;border-radius:2px"></div>
<svg style="left:616px;top:49px" width="14" height="14" viewBox="0 0 14 14"><path d="M1 1 L4 4 L1 4Z" fill="#888"/><path d="M2 12 L12 4 V12Z" fill="#f5b800"/></svg>
<svg style="left:637.0px;top:48px" width="16" height="16" viewBox="0 0 16 16"><path d="M1 1 L4 4 L1 4Z" fill="#999"/><circle cx="5" cy="11" r="1" fill="#9c9c9c"/><circle cx="12" cy="11" r="1" fill="#9c9c9c"/><circle cx="12" cy="5" r="1" fill="#9c9c9c"/></svg>
<svg style="left:659.7px;top:48px" width="16" height="16" viewBox="0 0 16 16"><rect x="2" y="3" width="12" height="10" fill="#9c9c9c"/></svg>
<svg style="left:682.4px;top:48px" width="16" height="16" viewBox="0 0 16 16"><rect x="2" y="3" width="12" height="10" fill="#9c9c9c"/><path d="M4 5 H9 L12 10" fill="none" stroke="#666"/></svg>
<svg style="left:705.1px;top:48px" width="16" height="16" viewBox="0 0 16 16"><circle cx="8" cy="3" r="2" fill="#9c9c9c"/><path d="M5 6 H11 L13 10 L11 10 L10 14 H6 L5 10 L3 10Z" fill="#9c9c9c"/></svg>
<svg style="left:727.8px;top:48px" width="16" height="16" viewBox="0 0 16 16"><path d="M1 1 L4 4 L1 4Z" fill="#999"/><path d="M5 7 H13 V13 H8 V10 H5Z" fill="none" stroke="#9c9c9c" stroke-width="1.5"/></svg>
<svg style="left:750.5px;top:48px" width="16" height="16" viewBox="0 0 16 16"><path d="M1 1 L4 4 L1 4Z" fill="#999"/><path d="M5 8 H15 L13 14 H3Z M7 8 L5 14 M10 8 L8 14 M13 8 L11 14 M4 11 H14" fill="none" stroke="#9c9c9c"/></svg>
<svg style="left:773.2px;top:48px" width="16" height="16" viewBox="0 0 16 16"><path d="M2 12 Q3 5 10 5 H14 V12Z" fill="#9c9c9c"/></svg>
<svg style="left:795.9px;top:48px" width="16" height="16" viewBox="0 0 16 16"><path d="M1 1 L4 4 L1 4Z" fill="#999"/><path d="M4 6 L7 4 H10 L13 6 L12 9 L11 8 V14 H6 V8 L5 9 Z" fill="#9c9c9c"/></svg>
<svg style="left:818.6px;top:48px" width="16" height="16" viewBox="0 0 16 16"><path d="M1 1 L4 4 L1 4Z" fill="#999"/><path d="M6 14 L13 6 L14 9 Z" fill="#9c9c9c"/><rect x="8" y="9" width="5" height="5" fill="#ddd"/></svg>
<svg style="left:841.3px;top:48px" width="16" height="16" viewBox="0 0 16 16"><path d="M3 3 V13 M7 3 V13 M11 3 V13" stroke="#9c9c9c" stroke-width="2.5"/></svg>
<svg style="left:864.0px;top:48px" width="16" height="16" viewBox="0 0 16 16"><path d="M1 1 L4 4 L1 4Z" fill="#999"/><path d="M3 14 L14 3" stroke="#9c9c9c" stroke-width="1.5"/></svg>
<svg style="left:886.7px;top:48px" width="16" height="16" viewBox="0 0 16 16"><path d="M2 4 L6 2 H10 L14 4 L13 8 L11 7 V14 H5 V7 L3 8 Z" fill="#9c9c9c"/></svg>
<div class="a" style="left:606px;top:66px;width:436px;height:2px;background:#2a2a2a;"></div>
<div class="a" style="left:606px;top:68px;width:434px;height:596px;background-color:#cbcbcb;background-image:linear-gradient(90deg,#c1c1c1 1px,transparent 1px),linear-gradient(#c1c1c1 1px,transparent 1px);background-size:16.75px 16.75px;background-position:11px 11.7px"></div>
<div class="a" style="left:602px;top:68px;width:5px;height:596px;background:#2c2c2e;"></div>
<div class="a" style="left:607px;top:68px;width:1px;height:596px;background:#dcdcdc;"></div>
<svg style="left:608px;top:68px" width="432" height="596" viewBox="608 68 432 596"><path d="M788 168 Q788 158 800 158 Q814 158 814 170 L813 188 Q812 196 808 199 L808 206 L830 214 Q840 218 842 228 L858 268 L872 300 L866 304 L848 270 L838 250 L836 300 L834 384 L834 440 L833 480 L823 480 L812 420 L806 398 L800 396 L793 400 L791 440 L790 480 L778 480 L776 420 L776 384 L774 300 L764 250 L740 280 L712 310 L704 306 L730 266 L750 228 Q754 216 766 212 L792 204 L792 198 Q788 194 787 186 Z" fill="#bcbcbc"/><path d="M834 384 L834 440 L833 480 L823 480 L812 420 L806 398 L800 396 L793 400 L791 440 L790 480 L778 480 L776 420 L776 384 Z" fill="#c1c1c1"/><path d="M801 68 V664" stroke="#8f8f8f" stroke-width="1"/><path d="M606 481 H1040" stroke="#9a9a9a" stroke-width="1"/><path d="M608 295 L856 298 M842 346 L856 346 M945 301 L1040 303 M945 323 L1040 320 M819 441 L872 438 M680 326 L745 325" stroke="#7b96ad" stroke-width="1.2" fill="none"/><path d="M606 244 Q630 247 650 259 L633 345 L606 345 Z" fill="#fff"/><path d="M606 244 Q630 247 650 259 L633 345 L606 345" fill="none" stroke="#60a0da" stroke-width="2.5"/><path d="M695.5 283 L723 363 Q695.5 376.0 669.5 363 Z" fill="#fff" stroke="#60a0da" stroke-width="2.5" stroke-linejoin="round"/><path d="M695.5 283 V370.0" stroke="#8a7777" stroke-width="0.8"/><path d="M1006.3 280 L1033.3 360 Q1006.3 372 980 360 Z" fill="#fff" stroke="#60a0da" stroke-width="2.5" stroke-linejoin="round"/><path d="M1006.3 280 V366.5" stroke="#8a7777" stroke-width="0.8"/><path d="M793 399 L819.2 480 Q793 493.0 765.8 480 Z" fill="#fff" stroke="#60a0da" stroke-width="2.5" stroke-linejoin="round"/><path d="M793 399 V487.0" stroke="#8a7777" stroke-width="0.8"/><path d="M898 396.7 L925 477 Q898 489.6 871.7 477 Z" fill="#fff" stroke="#60a0da" stroke-width="2.5" stroke-linejoin="round"/><path d="M898 396.7 V483.8" stroke="#8a7777" stroke-width="0.8"/><path d="M856 204 L881 204 Q888 211 900 211 Q912 211 918 204 L944 204 Q942 226 946 247 L945 383 L855 383 L856 247 Q859 226 856 204 Z" fill="#fff" stroke="#555" stroke-width="0.6"/><path d="M900 298 V383" stroke="#333" stroke-width="0.6"/><path d="M753 203 L780 203 Q784 218 793 218 Q802 218 808 203 L835 203 Q834 235 843 247 L842 384 L744 384 L744 247 Q753 235 753 203 Z" fill="#fff" stroke="#f2ea00" stroke-width="1.7"/><path d="M793 218 V384" stroke="#bbb" stroke-width="0.8" stroke-dasharray="3 2"/><path d="M793 294 V384" stroke="#f2ea00" stroke-width="1.6"/><rect x="730" y="190" width="126" height="206" fill="none" stroke="#666" stroke-width="0.9" stroke-dasharray="3 2"/><path d="M730 294 H856" stroke="#999" stroke-width="0.8" stroke-dasharray="3 2"/><path d="M793 171 V190" stroke="#666" stroke-width="0.8" stroke-dasharray="2 2"/><circle cx="730" cy="190" r="2.2" fill="#ddd" stroke="#666" stroke-width="0.8"/><circle cx="793" cy="190" r="2.2" fill="#ddd" stroke="#666" stroke-width="0.8"/><circle cx="856" cy="190" r="2.2" fill="#ddd" stroke="#666" stroke-width="0.8"/><circle cx="730" cy="294" r="2.2" fill="#ddd" stroke="#666" stroke-width="0.8"/><circle cx="856" cy="294" r="2.2" fill="#ddd" stroke="#666" stroke-width="0.8"/><circle cx="730" cy="396" r="2.2" fill="#ddd" stroke="#666" stroke-width="0.8"/><circle cx="793" cy="396" r="2.2" fill="#ddd" stroke="#666" stroke-width="0.8"/><circle cx="856" cy="396" r="2.2" fill="#ddd" stroke="#666" stroke-width="0.8"/><circle cx="793" cy="171" r="2.2" fill="#ddd" stroke="#666" stroke-width="0.8"/><path d="M790 294 L793 291 L796 294 L793 297Z" fill="none" stroke="#555" stroke-width="0.8"/><circle cx="770.5" cy="370" r="2.2" fill="#1010d0"/><text x="627" y="251" font-size="8" fill="#111" font-family="Liberation Sans" letter-spacing="-0.35">269.7</text><text x="642" y="302" font-size="8" fill="#111" font-family="Liberation Sans" letter-spacing="-0.35">512.1</text><text x="620" y="344" font-size="8" fill="#111" font-family="Liberation Sans" letter-spacing="-0.35">147.4</text><text x="681" y="325" font-size="8" fill="#111" font-family="Liberation Sans" letter-spacing="-0.35">506.0</text><text x="694" y="327" font-size="8" fill="#c22" font-family="Liberation Sans" letter-spacing="-0.35">506.0</text><text x="708" y="325" font-size="8" fill="#111" font-family="Liberation Sans" letter-spacing="-0.35">505.7</text><text x="685" y="369" font-size="8" fill="#111" font-family="Liberation Sans" letter-spacing="-0.35">310.6</text><text x="766" y="205" font-size="8" fill="#111" font-family="Liberation Sans" letter-spacing="-0.35">152.2</text><text x="820" y="205" font-size="8" fill="#111" font-family="Liberation Sans" letter-spacing="-0.35">152.2</text><text x="783" y="215" font-size="8" fill="#111" font-family="Liberation Sans" letter-spacing="-0.35">125.4</text><text x="796" y="215" font-size="8" fill="#111" font-family="Liberation Sans" letter-spacing="-0.35">125.4</text><text x="792" y="223" font-size="8" fill="#111" font-family="Liberation Sans" letter-spacing="-0.35">88.3</text><text x="753" y="228" font-size="8" fill="#111" font-family="Liberation Sans" letter-spacing="-0.35">274.5</text><text x="833" y="228" font-size="8" fill="#111" font-family="Liberation Sans" letter-spacing="-0.35">274.5</text><text x="744" y="317" font-size="8" fill="#111" font-family="Liberation Sans" letter-spacing="-0.35">812.4</text><text x="838" y="317" font-size="8" fill="#111" font-family="Liberation Sans" letter-spacing="-0.35">812.4</text><text x="793" y="342" font-size="8" fill="#111" font-family="Liberation Sans" letter-spacing="-0.35">506.0</text><text x="768" y="384" font-size="8" fill="#111" font-family="Liberation Sans" letter-spacing="-0.35">291.9</text><text x="817" y="384" font-size="8" fill="#111" font-family="Liberation Sans" letter-spacing="-0.35">291.9</text><text x="870" y="205" font-size="8" fill="#111" font-family="Liberation Sans" letter-spacing="-0.35">152.2</text><text x="888" y="211" font-size="8" fill="#111" font-family="Liberation Sans" letter-spacing="-0.35">122.0</text><text x="906" y="211" font-size="8" fill="#111" font-family="Liberation Sans" letter-spacing="-0.35">122.0</text><text x="931" y="205" font-size="8" fill="#111" font-family="Liberation Sans" letter-spacing="-0.35">152.2</text><text x="858" y="228" font-size="8" fill="#111" font-family="Liberation Sans" letter-spacing="-0.35">260.3</text><text x="945" y="228" font-size="8" fill="#111" font-family="Liberation Sans" letter-spacing="-0.35">260.3</text><text x="856" y="317" font-size="8" fill="#111" font-family="Liberation Sans" letter-spacing="-0.35">810.9</text><text x="945" y="317" font-size="8" fill="#111" font-family="Liberation Sans" letter-spacing="-0.35">810.9</text><text x="899" y="342" font-size="8" fill="#111" font-family="Liberation Sans" letter-spacing="-0.35">506.0</text><text x="876" y="384" font-size="8" fill="#111" font-family="Liberation Sans" letter-spacing="-0.35">272.2</text><text x="922" y="384" font-size="8" fill="#111" font-family="Liberation Sans" letter-spacing="-0.35">272.2</text><text x="991" y="320" font-size="8" fill="#111" font-family="Liberation Sans" letter-spacing="-0.35">505.7</text><text x="1004" y="322" font-size="8" fill="#c22" font-family="Liberation Sans" letter-spacing="-0.35">506.0</text><text x="1018" y="320" font-size="8" fill="#111" font-family="Liberation Sans" letter-spacing="-0.35">506.0</text><text x="996" y="365" font-size="8" fill="#111" font-family="Liberation Sans" letter-spacing="-0.35">310.6</text><text x="778" y="441" font-size="8" fill="#111" font-family="Liberation Sans" letter-spacing="-0.35">506.0</text><text x="792" y="443" font-size="8" fill="#c22" font-family="Liberation Sans" letter-spacing="-0.35">506.0</text><text x="806" y="441" font-size="8" fill="#111" font-family="Liberation Sans" letter-spacing="-0.35">505.7</text><text x="792" y="486" font-size="8" fill="#111" font-family="Liberation Sans" letter-spacing="-0.35">310.6</text><text x="884" y="438" font-size="8" fill="#111" font-family="Liberation Sans" letter-spacing="-0.35">505.7</text><text x="898" y="440" font-size="8" fill="#c22" font-family="Liberation Sans" letter-spacing="-0.35">506.0</text><text x="912" y="438" font-size="8" fill="#111" font-family="Liberation Sans" letter-spacing="-0.35">506.0</text><text x="898" y="482" font-size="8" fill="#111" font-family="Liberation Sans" letter-spacing="-0.35">310.6</text></svg>
<div class="a" style="left:613px;top:76px;width:15px;height:15px;background:#d2d2d2;border:1px solid #bdbdbd;border-radius:2px"></div>
<div class="a" style="left:631px;top:76px;width:15px;height:15px;background:#d2d2d2;border:1px solid #bdbdbd;border-radius:2px"></div>
<div class="a" style="left:649px;top:76px;width:15px;height:15px;background:#d2d2d2;border:1px solid #bdbdbd;border-radius:2px"></div>
<div class="a" style="left:667px;top:76px;width:15px;height:15px;background:#d2d2d2;border:1px solid #bdbdbd;border-radius:2px"></div>
<div class="a" style="left:685px;top:76px;width:15px;height:15px;background:#d2d2d2;border:1px solid #bdbdbd;border-radius:2px"></div>
<svg style="left:610px;top:74px" width="110" height="20" viewBox="610 74 110 20"><path d="M615 79 L626 88" stroke="#222" stroke-width="2"/><path d="M614 86 Q618 82 622 86 Q618 90 614 86Z" fill="#222"/><path d="M633 80 L636 78 H639 L642 80 L641 83 L640 82 V88 H634 V82 L633 83Z" fill="#fff" stroke="#aaa" stroke-width="0.4"/><path d="M631 88 Q634 85 637 88 Q634 90 631 88Z" fill="#222"/><circle cx="657" cy="83" r="5" fill="#333"/><text x="655" y="87" font-size="8" fill="#f0a000" font-family="Liberation Serif" font-style="italic">i</text><path d="M669 79 L679 77 L680 86 L670 88Z" fill="#f7a800"/><path d="M668 81 V88 H678" stroke="#fff" fill="none" stroke-width="1.4"/><path d="M687 80 L690 78 H693 L696 80 L695 83 L694 82 V88 H688 V82 L687 83Z" fill="#fff"/><rect x="686" y="85" width="4" height="4" fill="#666"/><path d="M705 84 V89 H717 V84 M711 84 V78 M708 80 L711 77 L714 80" stroke="#666" fill="none" stroke-width="1.5"/></svg>
<div class="a" style="left:1042px;top:30px;width:234px;height:636px;background:#2f2f31;"></div>
<div class="a" style="left:1044px;top:30px;width:232px;height:15px;background:#2a2a2a;"></div>
<div class="a" style="left:1047px;top:34px;width:6px;height:6px;background:#bbb;clip-path:polygon(0 30%,50% 30%,50% 0,100% 50%,50% 100%,50% 70%,0 70%)"></div>
<div class="a" style="left:1055px;top:33px;width:1px;height:10px;background:#1a1a1a;"></div>
<div class="t" style="left:1051px;width:200px;text-align:center;top:32px;font-size:9px;color:#aebcc6;transform:scaleX(0.84);">Fabric</div>
<div class="a" style="left:1196px;top:33px;width:9px;height:10px;background:#303032;border-radius:2px"></div>
<div class="t" style="left:1198px;top:33px;font-size:6px;color:#999">&#9660;</div>
<div class="a" style="left:1258px;top:34px;width:7px;height:6px;background:transparent;border:1px solid #777"></div>
<div class="t" style="left:1268px;top:31px;font-size:9px;color:#9a9a9a">&#x2715;</div>
<div class="a" style="left:1044px;top:45px;width:232px;height:207px;background:#3b3b3d;"></div>
<div class="a" style="left:1051px;top:52px;width:48px;height:18px;border:1px solid #5c5c5e;border-radius:2px;background:#3a3a3c"></div>
<div class="t" style="left:975.0px;width:200px;text-align:center;top:55px;font-size:8.5px;color:#d0d4d8;transform:scaleX(0.92);">Add</div>
<div class="a" style="left:1106px;top:52px;width:48px;height:18px;border:1px solid #5c5c5e;border-radius:2px;background:#3a3a3c"></div>
<div class="t" style="left:1030.0px;width:200px;text-align:center;top:55px;font-size:8.5px;color:#707478;transform:scaleX(0.92);">Copy</div>
<div class="a" style="left:1160px;top:52px;width:48px;height:18px;border:1px solid #5c5c5e;border-radius:2px;background:#3a3a3c"></div>
<div class="t" style="left:1084.0px;width:200px;text-align:center;top:55px;font-size:8.5px;color:#d0d4d8;transform:scaleX(0.92);">Assign</div>
<div class="a" style="left:1215px;top:52px;width:55px;height:18px;border:1px solid #5c5c5e;border-radius:2px;background:#3a3a3c"></div>
<div class="t" style="left:1142.5px;width:200px;text-align:center;top:55px;font-size:8.5px;color:#d0d4d8;transform:scaleX(0.92);">Delete Unused</div>
<div class="a" style="left:1051px;top:77px;width:218px;height:166px;background:#2b2b2b;"></div>
<div class="a" style="left:1087px;top:89px;width:24px;height:24px;background:#fafafa;"></div>
<div class="a" style="left:1105px;top:89px;width:6px;height:10px;background:#e2e2e2;"></div>
<div class="a" style="left:1105px;top:104px;width:6px;height:9px;background:#d8d8d8;"></div>
<div class="t" style="left:1117px;top:96px;font-size:8.5px;color:#9ec3d0;transform:scaleX(0.92);transform-origin:0 50%;">TunicPattern</div>
<div class="a" style="left:1057px;top:119px;width:206px;height:1px;background:#343434;"></div>
<div class="a" style="left:1087px;top:126px;width:24px;height:24px;background:#fafafa;"></div>
<div class="t" style="left:1117px;top:132px;font-size:8.5px;color:#e49a34;transform:scaleX(0.92);transform-origin:0 50%;">Undertunic</div>
<svg style="left:1067px;top:133px" width="10" height="8" viewBox="0 0 10 8"><path d="M1 4 L4 7 L9 1" stroke="#f2c318" stroke-width="2" fill="none"/></svg>
<div class="a" style="left:1057px;top:156px;width:206px;height:1px;background:#343434;"></div>
<div class="a" style="left:1245px;top:97px;width:9px;height:9px;background:#3a3a3a;border-radius:1px"></div>
<div class="a" style="left:1247px;top:99px;width:5px;height:3px;background:#8a8a8a;"></div>
<div class="a" style="left:1245px;top:133px;width:9px;height:9px;background:#3a3a3a;border-radius:1px"></div>
<div class="a" style="left:1247px;top:135px;width:5px;height:3px;background:#8a8a8a;"></div>
<div class="a" style="left:1044px;top:242px;width:232px;height:10px;background:#3b3b3d;"></div>
<div class="a" style="left:1044px;top:252px;width:232px;height:15px;background:#2a2a2a;"></div>
<div class="a" style="left:1047px;top:256px;width:6px;height:6px;background:#bbb;clip-path:polygon(0 30%,50% 30%,50% 0,100% 50%,50% 100%,50% 70%,0 70%)"></div>
<div class="a" style="left:1055px;top:255px;width:1px;height:10px;background:#1a1a1a;"></div>
<div class="t" style="left:1050px;width:200px;text-align:center;top:254px;font-size:9px;color:#aebcc6;transform:scaleX(0.84);">Property Editor</div>
<div class="a" style="left:1196px;top:255px;width:9px;height:10px;background:#303032;border-radius:2px"></div>
<div class="t" style="left:1198px;top:255px;font-size:6px;color:#999">&#9660;</div>
<div class="a" style="left:1258px;top:256px;width:7px;height:6px;background:transparent;border:1px solid #777"></div>
<div class="t" style="left:1268px;top:253px;font-size:9px;color:#9a9a9a">&#x2715;</div>
<div class="a" style="left:1044px;top:267px;width:232px;height:399px;background:#3b3b3d;"></div>
<div class="a" style="left:1254px;top:274px;width:12px;height:382px;background:#262628;border-radius:2px"></div>
<div class="a" style="left:1254px;top:274px;width:12px;height:11px;background:#343436;border-radius:2px;border:1px solid #2a2a2a"></div>
<div class="t" style="left:1257px;top:274px;font-size:6px;color:#888;transform:none">&#9650;</div>
<div class="a" style="left:1255px;top:353px;width:10px;height:237px;background:#313133;"></div>
<div class="a" style="left:1254px;top:645px;width:12px;height:11px;background:#343436;border-radius:2px;border:1px solid #2a2a2a"></div>
<div class="t" style="left:1257px;top:645px;font-size:6px;color:#888;transform:none">&#9660;</div>
<div class="a" style="left:1056px;top:275px;width:194px;height:1px;background:#343436;"></div>
<div class="a" style="left:1061px;top:283px;width:0;height:0;border-left:3px solid transparent;border-right:3px solid transparent;border-top:4px solid #8a8a8a"></div>
<div class="t" style="left:1071px;top:278px;font-size:8.5px;color:#b8c8d4;transform:scaleX(0.87);transform-origin:0 50%;">Curved Side Geometry</div>
<div class="a" style="left:1232px;top:279px;width:9px;height:10px;background:#f2c318;border-radius:2px"></div>
<svg style="left:1233px;top:280px" width="8" height="8" viewBox="0 0 8 8"><path d="M1 4 L3.2 6.2 L7 1.5" stroke="#333" stroke-width="1.3" fill="none"/></svg>
<div class="a" style="left:1058px;top:291px;width:192px;height:1px;background:#343436;"></div>
<div class="t" style="left:1074px;top:300px;font-size:8.5px;color:#b8c4cc;transform:scaleX(0.87);transform-origin:0 50%;">Curvature (%)</div>
<div class="a" style="left:1178px;top:293px;width:62px;height:13px;background:#343436;border:1px solid #2c2c2e"></div>
<div class="t" style="left:1181px;top:293.5px;font-size:8.5px;color:#c8ccd0;transform:scaleX(0.92);transform-origin:0 50%;">100</div>
<div class="a" style="left:1180px;top:312px;width:60px;height:2px;background:#262626;"></div>
<div class="a" style="left:1180px;top:312px;width:58px;height:2px;background:#f2d400;"></div>
<div class="a" style="left:1236px;top:308px;width:5px;height:8px;background:#d9d9d9;border-radius:1px"></div>
<div class="a" style="left:1058px;top:320px;width:192px;height:1px;background:#343436;"></div>
<div class="t" style="left:1074px;top:322px;font-size:8.5px;color:#b8c4cc;transform:scaleX(0.87);transform-origin:0 50%;">Double Sided</div>
<div class="a" style="left:1232px;top:323px;width:9px;height:9px;background:transparent;border:1px solid #666;border-radius:2px"></div>
<div class="a" style="left:1052px;top:336px;width:198px;height:1px;background:#343436;"></div>
<div class="a" style="left:1054px;top:343px;width:0;height:0;border-left:3px solid transparent;border-right:3px solid transparent;border-top:4px solid #8a8a8a"></div>
<div class="t" style="left:1063px;top:338px;font-size:8.5px;color:#e59a2f;transform:scaleX(0.87);transform-origin:0 50%;">Simulation Properties</div>
<div class="a" style="left:1058px;top:352px;width:192px;height:1px;background:#343436;"></div>
<div class="t" style="left:1066px;top:354px;font-size:8.5px;color:#b8c4cc;transform:scaleX(0.87);transform-origin:0 50%;">Particle Distance (mm)</div>
<div class="a" style="left:1178px;top:354px;width:62px;height:12px;background:#343436;border:1px solid #2c2c2e"></div>
<div class="t" style="left:1181px;top:354.0px;font-size:8.5px;color:#c8ccd0;transform:scaleX(0.92);transform-origin:0 50%;">20.0</div>
<div class="a" style="left:1058px;top:368px;width:192px;height:1px;background:#343436;"></div>
<div class="t" style="left:1066px;top:370px;font-size:8.5px;color:#b8c4cc;transform:scaleX(0.87);transform-origin:0 50%;">Layer</div>
<div class="a" style="left:1178px;top:370px;width:62px;height:12px;background:#343436;border:1px solid #2c2c2e"></div>
<div class="t" style="left:1181px;top:370.0px;font-size:8.5px;color:#c8ccd0;transform:scaleX(0.92);transform-origin:0 50%;">0</div>
<div class="a" style="left:1058px;top:384px;width:192px;height:1px;background:#343436;"></div>
<div class="t" style="left:1066px;top:386px;font-size:8.5px;color:#b8c4cc;transform:scaleX(0.87);transform-origin:0 50%;">Shrinkage Weft (%)</div>
<div class="a" style="left:1178px;top:386px;width:62px;height:12px;background:#343436;border:1px solid #2c2c2e"></div>
<div class="t" style="left:1181px;top:386.0px;font-size:8.5px;color:#c8ccd0;transform:scaleX(0.92);transform-origin:0 50%;">100.00</div>
<div class="a" style="left:1058px;top:400px;width:192px;height:1px;background:#343436;"></div>
<div class="t" style="left:1066px;top:402px;font-size:8.5px;color:#b8c4cc;transform:scaleX(0.87);transform-origin:0 50%;">Shrinkage Warp (%)</div>
<div class="a" style="left:1178px;top:402px;width:62px;height:12px;background:#343436;border:1px solid #2c2c2e"></div>
<div class="t" style="left:1181px;top:402.0px;font-size:8.5px;color:#c8ccd0;transform:scaleX(0.92);transform-origin:0 50%;">100.00</div>
<div class="a" style="left:1058px;top:416px;width:192px;height:1px;background:#343436;"></div>
<div class="t" style="left:1066px;top:418px;font-size:8.5px;color:#b8c4cc;transform:scaleX(0.87);transform-origin:0 50%;">Add'l Thickness - Collision (mm)</div>
<div class="a" style="left:1184px;top:418px;width:56px;height:12px;background:#343436;border:1px solid #2c2c2e"></div>
<div class="t" style="left:1187px;top:418.0px;font-size:8.5px;color:#c8ccd0;transform:scaleX(0.92);transform-origin:0 50%;">2.5</div>
<div class="a" style="left:1058px;top:432px;width:192px;height:1px;background:#343436;"></div>
<div class="t" style="left:1066px;top:434px;font-size:8.5px;color:#b8c4cc;transform:scaleX(0.87);transform-origin:0 50%;">Add'l Thickness - Rendering (mm)</div>
<div class="a" style="left:1189px;top:434px;width:51px;height:12px;background:#343436;border:1px solid #2c2c2e"></div>
<div class="t" style="left:1192px;top:434.0px;font-size:8.5px;color:#c8ccd0;transform:scaleX(0.92);transform-origin:0 50%;">0.0</div>
<div class="a" style="left:1058px;top:448px;width:192px;height:1px;background:#343436;"></div>
<div class="a" style="left:1063px;top:459px;width:0;height:0;border-top:3px solid transparent;border-bottom:3px solid transparent;border-left:4px solid #8a8a8a"></div>
<div class="t" style="left:1071px;top:456px;font-size:8.5px;color:#b8c4cc;transform:scaleX(0.87);transform-origin:0 50%;">Pressure</div>
<div class="a" style="left:1178px;top:450px;width:62px;height:13px;background:#343436;border:1px solid #2c2c2e"></div>
<div class="t" style="left:1181px;top:450.5px;font-size:8.5px;color:#c8ccd0;transform:scaleX(0.92);transform-origin:0 50%;">0</div>
<div class="a" style="left:1180px;top:468px;width:60px;height:2px;background:#262626;"></div>
<div class="a" style="left:1180px;top:468px;width:31px;height:2px;background:#f2d400;"></div>
<div class="a" style="left:1209px;top:464px;width:5px;height:8px;background:#d9d9d9;border-radius:1px"></div>
<div class="a" style="left:1052px;top:477px;width:198px;height:1px;background:#343436;"></div>
<div class="a" style="left:1054px;top:484px;width:0;height:0;border-left:3px solid transparent;border-right:3px solid transparent;border-top:4px solid #8a8a8a"></div>
<div class="t" style="left:1063px;top:479px;font-size:8.5px;color:#e59a2f;transform:scaleX(0.87);transform-origin:0 50%;">Fabric</div>
<div class="a" style="left:1058px;top:493px;width:192px;height:1px;background:#343436;"></div>
<div class="t" style="left:1066px;top:495px;font-size:8.5px;color:#b8c4cc;transform:scaleX(0.87);transform-origin:0 50%;">Fabric</div>
<div class="a" style="left:1168px;top:495px;width:13px;height:13px;background:#fafafa;"></div>
<div class="a" style="left:1184px;top:495px;width:56px;height:13px;background:#343436;border:1px solid #2c2c2e"></div>
<div class="t" style="left:1187px;top:495.5px;font-size:8.5px;color:#c8ccd0;transform:scaleX(0.92);transform-origin:0 50%;">Undertunic</div>
<div class="a" style="left:1229px;top:497px;width:9px;height:9px;background:#2c2c2e;"></div>
<div class="a" style="left:1231px;top:500px;width:0;height:0;border-left:3px solid transparent;border-right:3px solid transparent;border-top:4px solid #aaa"></div>
<div class="a" style="left:1058px;top:509px;width:192px;height:1px;background:#343436;"></div>
<div class="t" style="left:1066px;top:511px;font-size:8.5px;color:#b8c4cc;transform:scaleX(0.87);transform-origin:0 50%;">Grain Direction</div>
<div class="a" style="left:1178px;top:511px;width:62px;height:12px;background:#343436;border:1px solid #2c2c2e"></div>
<div class="t" style="left:1181px;top:511.0px;font-size:8.5px;color:#c8ccd0;transform:scaleX(0.92);transform-origin:0 50%;">0.0</div>
<div class="a" style="left:1052px;top:525px;width:198px;height:1px;background:#343436;"></div>
<div class="a" style="left:1055px;top:530px;width:0;height:0;border-top:3px solid transparent;border-bottom:3px solid transparent;border-left:4px solid #8a8a8a"></div>
<div class="t" style="left:1063px;top:527px;font-size:8.5px;color:#e59a2f;transform:scaleX(0.87);transform-origin:0 50%;">Bond/Skive</div>
<div class="a" style="left:1052px;top:541px;width:198px;height:1px;background:#343436;"></div>
<div class="t" style="left:1058px;top:543px;font-size:8.5px;color:#e59a2f;transform:scaleX(0.87);transform-origin:0 50%;">Solidify</div>
<div class="a" style="left:1232px;top:544px;width:9px;height:9px;background:transparent;border:1px solid #666;border-radius:2px"></div>
<div class="a" style="left:1052px;top:557px;width:198px;height:1px;background:#343436;"></div>
<div class="a" style="left:1054px;top:564px;width:0;height:0;border-left:3px solid transparent;border-right:3px solid transparent;border-top:4px solid #8a8a8a"></div>
<div class="t" style="left:1063px;top:559px;font-size:8.5px;color:#e59a2f;transform:scaleX(0.87);transform-origin:0 50%;">Arrangement</div>
<div class="a" style="left:1058px;top:573px;width:192px;height:1px;background:#343436;"></div>
<div class="t" style="left:1066px;top:575px;font-size:8.5px;color:#b8c4cc;transform:scaleX(0.87);transform-origin:0 50%;">Point Name</div>
<div class="a" style="left:1155px;top:575px;width:85px;height:12px;background:#343436;border:1px solid #2c2c2e"></div>
<div class="t" style="left:1158px;top:575.0px;font-size:8.5px;color:#c8ccd0;transform:scaleX(0.92);transform-origin:0 50%;">not assigned</div>
<div class="a" style="left:1229px;top:576px;width:9px;height:10px;background:#2c2c2e;"></div>
<div class="a" style="left:1231px;top:580px;width:0;height:0;border-left:3px solid transparent;border-right:3px solid transparent;border-top:4px solid #aaa"></div>
<div class="a" style="left:1058px;top:589px;width:192px;height:1px;background:#343436;"></div>
<div class="t" style="left:1066px;top:591px;font-size:8.5px;color:#b8c4cc;transform:scaleX(0.87);transform-origin:0 50%;">Shape Style</div>
<div class="a" style="left:1165px;top:591px;width:75px;height:12px;background:#343436;border:1px solid #2c2c2e"></div>
<div class="t" style="left:1168px;top:591.0px;font-size:8.5px;color:#c8ccd0;transform:scaleX(0.92);transform-origin:0 50%;">Curved</div>
<div class="a" style="left:1229px;top:592px;width:9px;height:10px;background:#2c2c2e;"></div>
<div class="a" style="left:1231px;top:596px;width:0;height:0;border-left:3px solid transparent;border-right:3px solid transparent;border-top:4px solid #aaa"></div>
<div class="a" style="left:1058px;top:605px;width:192px;height:1px;background:#343436;"></div>
<div class="t" style="left:1066px;top:613px;font-size:8.5px;color:#b8c4cc;transform:scaleX(0.87);transform-origin:0 50%;">Position X</div>
<div class="a" style="left:1178px;top:606px;width:62px;height:13px;background:#343436;border:1px solid #2c2c2e"></div>
<div class="t" style="left:1181px;top:606.5px;font-size:8.5px;color:#c8ccd0;transform:scaleX(0.92);transform-origin:0 50%;">50</div>
<div class="a" style="left:1180px;top:626px;width:60px;height:2px;background:#262626;"></div>
<div class="a" style="left:1180px;top:626px;width:31px;height:2px;background:#f2d400;"></div>
<div class="a" style="left:1209px;top:622px;width:5px;height:8px;background:#d9d9d9;border-radius:1px"></div>
<div class="a" style="left:1058px;top:633px;width:192px;height:1px;background:#343436;"></div>
<div class="t" style="left:1066px;top:642px;font-size:8.5px;color:#b8c4cc;transform:scaleX(0.87);transform-origin:0 50%;">Position Y</div>
<div class="a" style="left:1178px;top:635px;width:62px;height:13px;background:#343436;border:1px solid #2c2c2e"></div>
<div class="t" style="left:1181px;top:635.5px;font-size:8.5px;color:#c8ccd0;transform:scaleX(0.92);transform-origin:0 50%;">50</div>
<div class="a" style="left:1180px;top:654px;width:60px;height:2px;background:#262626;"></div>
<div class="a" style="left:1180px;top:654px;width:31px;height:2px;background:#f2d400;"></div>
<div class="a" style="left:1209px;top:650px;width:5px;height:8px;background:#d9d9d9;border-radius:1px"></div>
<div class="a" style="left:1180px;top:670px;width:12px;height:11px;background:transparent;border:1px solid #6a6a6c;border-radius:2px"></div>
<div class="a" style="left:1199px;top:670px;width:12px;height:11px;background:transparent;border:1px solid #6a6a6c;border-radius:2px"></div>
<div class="a" style="left:1219px;top:670px;width:12px;height:11px;background:transparent;border:1px solid #6a6a6c;border-radius:2px"></div>
<div class="a" style="left:1238px;top:670px;width:12px;height:11px;background:transparent;border:1px solid #6a6a6c;border-radius:2px"></div>
<div class="a" style="left:1257px;top:670px;width:12px;height:11px;background:transparent;border:1px solid #6a6a6c;border-radius:2px"></div>
<div class="a" style="left:659px;top:673px;width:0;height:0;border-left:5px solid transparent;border-right:5px solid transparent;border-bottom:6px solid #a0a0a0"></div>
<svg style="left:1050px;top:645px" width="227" height="70" viewBox="1050 645 227 70"><g fill="#ffffff" fill-opacity="0.15"><path d="M1060 683 L1066 677 L1072 680 L1078 676 L1084 678 L1090 675 L1097 679 L1104 677 L1108 684 L1104 690 L1110 696 L1104 702 L1096 700 L1090 704 L1082 702 L1074 704 L1068 700 L1060 702 L1056 696 L1062 690 Z M1070 688 Q1084 700 1100 688 Q1090 680 1080 682 Q1072 683 1070 688 Z" fill-rule="evenodd"/><path d="M1072 690 Q1078 668 1099 655 Q1086 672 1084 690 Z"/></g><text x="1127" y="678" font-family="Liberation Sans" font-size="10" font-weight="bold" fill="#fff" fill-opacity="0.15" transform="rotate(-90 1127 678)" textLength="24" lengthAdjust="spacingAndGlyphs">THE</text><text x="1130" y="683" font-family="Liberation Sans" font-size="34" font-weight="bold" fill="#fff" fill-opacity="0.13" textLength="136" lengthAdjust="spacingAndGlyphs">GNOMON</text><text x="1116" y="704" font-family="Liberation Sans" font-size="25" font-weight="bold" fill="#fff" fill-opacity="0.13" textLength="149" lengthAdjust="spacingAndGlyphs">WORKSHOP</text></svg>
<div class="a" style="left:1276px;top:0px;width:2px;height:692px;background:#2c2c2e;"></div>
<div class="a" style="left:1278px;top:0px;width:2px;height:692px;background:#141414;"></div>
</body></html>
